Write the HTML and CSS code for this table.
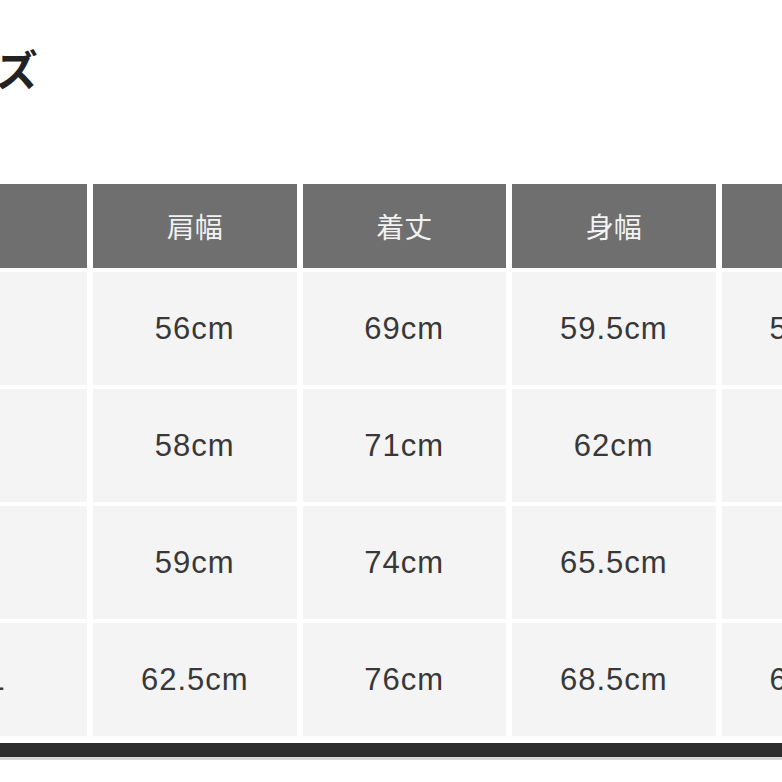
FILE: index.html
```html
<!DOCTYPE html>
<html lang="ja">
<head>
<meta charset="utf-8">
<link rel="stylesheet" href="styles.css">
</head>
<body>
<div class="page">
  <h2 class="title">サイズ</h2>
  <div class="table">
    <div class="cell head"></div>
    <div class="cell head">肩幅</div>
    <div class="cell head">着丈</div>
    <div class="cell head">身幅</div>
    <div class="cell head">袖丈</div>

    <div class="cell">S</div>
    <div class="cell">56cm</div>
    <div class="cell">69cm</div>
    <div class="cell">59.5cm</div>
    <div class="cell">57.5cm</div>

    <div class="cell">M</div>
    <div class="cell">58cm</div>
    <div class="cell">71cm</div>
    <div class="cell">62cm</div>
    <div class="cell">60cm</div>

    <div class="cell">L</div>
    <div class="cell">59cm</div>
    <div class="cell">74cm</div>
    <div class="cell">65.5cm</div>
    <div class="cell">61cm</div>

    <div class="cell">XL</div>
    <div class="cell">62.5cm</div>
    <div class="cell">76cm</div>
    <div class="cell">68.5cm</div>
    <div class="cell">63.5cm</div>
  </div>
  <div class="rule"></div>
</div>
</body>
</html>
```

FILE: styles.css
```css
html, body {
  margin: 0;
  padding: 0;
  background: #ffffff;
  overflow: hidden;
}

.page {
  width: 782px;
  height: 782px;
  overflow: hidden;
}

.title {
  margin: 0;
  padding-top: 42px;
  margin-left: -87px;
  height: 140px;
  box-sizing: border-box;
  font-family: "Noto Sans CJK JP", "Noto Sans", sans-serif;
  font-weight: 700;
  font-size: 42px;
  line-height: 52px;
  color: #222222;
  white-space: nowrap;
}

.table {
  display: grid;
  grid-template-columns: repeat(5, 203.5px);
  grid-template-rows: 84px repeat(4, 113px);
  column-gap: 6px;
  row-gap: 4px;
  margin-left: -116.5px;
  margin-top: 44px;
  width: max-content;
}

.cell {
  display: flex;
  align-items: center;
  justify-content: center;
  background: #f4f4f4;
  color: #383838;
  font-family: "Liberation Sans", Arial, sans-serif;
  font-size: 31px;
  letter-spacing: 1px;
  white-space: nowrap;
}

.cell.head {
  background: #6f6f6f;
  color: #f2f2f2;
  font-family: "Noto Sans CJK JP", "Noto Sans", sans-serif;
  font-size: 28px;
  letter-spacing: 0;
}

.rule {
  margin-top: 7px;
  height: 14px;
  background: #2e2e2e;
  border-bottom: 3px solid #d6d6d6;
}
```
